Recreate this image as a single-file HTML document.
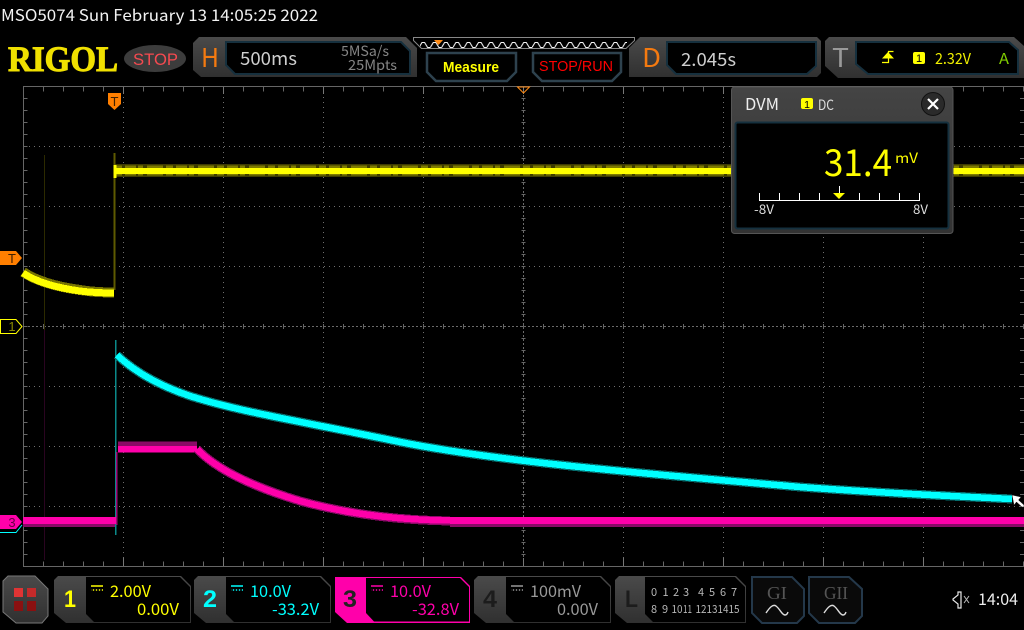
<!DOCTYPE html>
<html><head><meta charset="utf-8"><style>
html,body{margin:0;padding:0;background:#000;width:1024px;height:630px;overflow:hidden}
svg{display:block}
text{font-family:"Noto Sans CJK SC","Liberation Sans",sans-serif}
text.a{font-family:"Liberation Sans",sans-serif}
text.s{font-family:"Liberation Serif",serif}
.tr{shape-rendering:crispEdges}
</style></head><body>
<svg width="1024" height="630" viewBox="0 0 1024 630" xmlns="http://www.w3.org/2000/svg">
<defs>
<linearGradient id="g" x1="0" y1="0" x2="0" y2="1"><stop offset="0" stop-color="#4a4a4a"/><stop offset="1" stop-color="#303030"/></linearGradient>
<linearGradient id="gb" x1="0" y1="0" x2="0" y2="1"><stop offset="0" stop-color="#444"/><stop offset="1" stop-color="#333"/></linearGradient>
<pattern id="zz" x="419" y="41" width="11.3" height="8" patternUnits="userSpaceOnUse"><path d="M0 6.500 L3 1.500 L5.600 1.500 L8.600 6.500 L11.300 6.500" fill="none" stroke="#f4f4f4" stroke-width="1.100"/></pattern>
</defs>
<rect width="1024" height="630" fill="#000"/>

<!-- grid -->
<g fill="none" stroke="#5e5e5e" stroke-width="1">
<path d="M23.500 86.500H1024M23.500 86V567M23 566.500H1024" stroke="#666"/>
<g stroke-dasharray="1 4" stroke="#707070">
<path d="M24 146.500H1024M24 206.500H1024M24 266.500H1024M24 386.500H1024M24 446.500H1024M24 506.500H1024"/>
<path d="M123.500 87V566M223.500 87V566M323.500 87V566M423.500 87V566M623.500 87V566M723.500 87V566M823.500 87V566M923.500 87V566"/>
</g>
<g stroke-dasharray="2 2" stroke="#6a6a6a">
<path d="M24 326.500H1024M523.500 87V566"/>
</g>
<!-- ticks -->
<path d="M23 89H1024" stroke-width="5" stroke-dasharray="1 19" stroke="#666"/>
<path d="M23 564H1024" stroke-width="5" stroke-dasharray="1 19" stroke="#666"/>
<path d="M23 326.500H1024" stroke-width="5" stroke-dasharray="1 19" stroke="#666"/>
<path d="M25.500 86V566" stroke-width="4" stroke-dasharray="1 11" stroke="#666"/>
<path d="M1022 86V566" stroke-width="4" stroke-dasharray="1 11" stroke="#666"/>
<path d="M523.500 86V566" stroke-width="4" stroke-dasharray="1 11" stroke="#666"/>
<path d="M123.500 87V94M223.500 87V94M323.500 87V94M423.500 87V94M523.500 87V94M623.500 87V94M723.500 87V94M823.500 87V94M923.500 87V94" stroke="#777"/>
<path d="M123.500 558V566M223.500 558V566M323.500 558V566M423.500 558V566M523.500 558V566M623.500 558V566M723.500 558V566M823.500 558V566M923.500 558V566" stroke="#777"/>
</g>

<!-- ghost lines -->
<path d="M44.500 155V330" stroke="#2c2a00" stroke-width="1"/>
<path d="M44.500 330V560" stroke="#2a0420" stroke-width="1"/>

<!-- yellow trace -->
<g fill="none" class="tr">
<path d="M115 170.500H1024" stroke="#3e3c00" stroke-width="13"/>
<path d="M115 170.500H1024" stroke="#7e7b00" stroke-width="10" stroke-dasharray="7 3 11 2 5 4 16 3"/>
<path d="M115 171H1024" stroke="#ffff00" stroke-width="6"/>
<path d="M114.500 153V290" stroke="#5e5a00" stroke-width="2"/>
<path d="M115 165V178" stroke="#ffff00" stroke-width="3"/>
<path d="M23 272C38 282 58 287 80 290C92 292 102 292.500 114 292.500" stroke="#777400" stroke-width="10"/>
<path d="M23 273C38 283 58 288 80 291C92 292.500 102 293 114 293" stroke="#ffff00" stroke-width="7"/>
</g>

<!-- cyan trace -->
<g fill="none" class="tr">
<path d="M115.500 340V535" stroke="#0b8a8a" stroke-width="1.500"/>
<path d="M117 355C135 372 160 386 190 396C240 412 300 421 400 442C500 462 650 474 800 487C880 493 950 496 1012 499" stroke="#056c6c" stroke-width="9"/>
<path d="M117 355C135 372 160 386 190 396C240 412 300 421 400 442C500 462 650 474 800 487C880 493 950 496 1012 499" stroke="#00ffff" stroke-width="6.500"/>
</g>

<!-- magenta trace -->
<g fill="none" class="tr">
<path d="M23 522H115M450 522H1024" stroke="#8a0a66" stroke-width="10"/>
<path d="M23 520.500H116" stroke="#ff00aa" stroke-width="7"/>
<path d="M116.500 452V525" stroke="#a00a78" stroke-width="1.500"/>
<path d="M118 447H197" stroke="#8a0a66" stroke-width="11"/>
<path d="M118 449H197" stroke="#ff00aa" stroke-width="6.500"/>
<path d="M197 449C215 468 250 486 300 501C340 512 390 520 450 521" stroke="#8a0a66" stroke-width="9"/>
<path d="M197 449C215 468 250 486 300 501C340 512 390 520 450 520.500" stroke="#ff00aa" stroke-width="6.500"/>
<path d="M450 520.500H1024" stroke="#ff00aa" stroke-width="7"/>
</g>

<!-- cursor -->
<path d="M1012 495L1021 497L1018.500 500L1024 505L1024 507L1022 507L1016.500 502L1014 505Z" fill="#fff" stroke="#222" stroke-width=".5"/>

<!-- markers -->
<path d="M108 93H121V104L114.500 110L108 104Z" fill="#ff7f00"/>
<text class="a" x="114.500" y="106" font-size="13" text-anchor="middle" fill="#402000">T</text>
<path d="M517.500 87H529.500L523.500 93Z" fill="none" stroke="#ff8a14" stroke-width="1"/>
<path d="M0 251H16L22 258L16 265H0Z" fill="#ff7f00"/>
<text class="a" x="12" y="263" font-size="13" text-anchor="middle" fill="#402000">T</text>
<path d="M0.500 319.500H16L22 326.500L16 333.500H0.500Z" fill="#000" stroke="#ffff00" stroke-width="1"/>
<text class="a" x="12" y="331" font-size="13" text-anchor="middle" fill="#8a8a00">1</text>
<path d="M0 532.500H16L22 525" fill="none" stroke="#00ffff" stroke-width="1"/>
<path d="M0 515H16L22 522L16 529H0Z" fill="#ff00aa"/>
<text class="a" x="12" y="527" font-size="13" text-anchor="middle" fill="#660044">3</text>

<!-- header -->
<text x="1" y="21" font-size="16" fill="#f2f2f2" textLength="317" lengthAdjust="spacingAndGlyphs">MSO5074  Sun February 13 14:05:25 2022</text>
<text class="s" x="8" y="71" font-size="36" font-weight="bold" fill="#f0e000" stroke="#f0e000" stroke-width="1" textLength="110" lengthAdjust="spacingAndGlyphs">RIGOL</text>
<ellipse cx="155" cy="58.500" rx="31" ry="13.500" fill="#3c3c3c"/>
<text class="a" x="133" y="65" font-size="17" fill="#f54a50" textLength="45" lengthAdjust="spacingAndGlyphs">STOP</text>

<!-- H -->
<path d="M199 37H406L417 48V77H201L193 70V43Z" fill="url(#g)"/>
<path d="M226 42H401L410 51V74H235L226 65Z" fill="#000" stroke="#16303e" stroke-width="2"/>
<text x="201" y="67" font-size="26" fill="#f47a10" textLength="18" lengthAdjust="spacingAndGlyphs">H</text>
<text x="240" y="65" font-size="18" fill="#cfcfcf" textLength="57" lengthAdjust="spacingAndGlyphs">500ms</text>
<text x="341" y="56" font-size="14" fill="#858585" textLength="48" lengthAdjust="spacingAndGlyphs">5MSa/s</text>
<text x="348" y="70" font-size="14" fill="#858585" textLength="49" lengthAdjust="spacingAndGlyphs">25Mpts</text>

<!-- zigzag bar -->
<path d="M413.500 37.500H634.500V40.500L626 48.500H421.500L413.500 40.500Z" fill="#000" stroke="#888" stroke-width="1"/>
<rect x="420" y="41" width="207" height="7" fill="url(#zz)"/>
<path d="M434 40H443L438.500 45Z" fill="#ff8a14"/>

<!-- Measure / STOP -->
<path d="M427 53H516V72L507 81H436L427 72Z" fill="#000" stroke="#2e424e" stroke-width="2.500"/>
<text class="a" x="443" y="72" font-size="15" font-weight="bold" fill="#ffff00" textLength="56" lengthAdjust="spacingAndGlyphs">Measure</text>
<path d="M533 53H621V72L612 81H542L533 72Z" fill="#000" stroke="#2e424e" stroke-width="2.500"/>
<text class="a" x="539" y="71" font-size="14.500" fill="#ff0000" textLength="74" lengthAdjust="spacingAndGlyphs">STOP/RUN</text>

<!-- D -->
<path d="M640 37H817L821 41V73L817 77H629V48Z" fill="url(#g)"/>
<path d="M667 42H816V66L807 74H676L667 65Z" fill="#000" stroke="#16303e" stroke-width="2"/>
<text x="642" y="67" font-size="26" fill="#f47a10" textLength="19" lengthAdjust="spacingAndGlyphs">D</text>
<text x="681" y="66" font-size="18" fill="#cfcfcf" textLength="55" lengthAdjust="spacingAndGlyphs">2.045s</text>

<!-- T -->
<path d="M829 37H1014L1024 46V78H838L825 66V41Z" fill="url(#g)"/>
<path d="M856 42H1009L1018 50V74H868L856 64Z" fill="#000" stroke="#16303e" stroke-width="2"/>
<text x="832" y="67" font-size="26" fill="#9a9a9a" textLength="17" lengthAdjust="spacingAndGlyphs">T</text>
<path d="M882 62.500H888.500V51.500H893.500" fill="none" stroke="#ffff00" stroke-width="1.200"/>
<path d="M888 52L882 58.500H894Z" fill="#ffff00"/>
<rect x="913" y="52" width="12" height="12" rx="2" fill="#ffff00"/>
<text class="a" x="919" y="62" font-size="11" text-anchor="middle" fill="#000">1</text>
<text x="935" y="64" font-size="15" fill="#f0f000" textLength="36" lengthAdjust="spacingAndGlyphs">2.32V</text>
<text x="999" y="64" font-size="15" fill="#80cc00" textLength="10" lengthAdjust="spacingAndGlyphs">A</text>

<!-- DVM -->
<rect x="731.500" y="87" width="221.500" height="146.500" rx="3" fill="url(#gb)" stroke="#555" stroke-width="1"/>
<rect x="735.500" y="122.500" width="213" height="106" rx="2" fill="#000" stroke="#15303e" stroke-width="2"/>
<text x="745" y="110" font-size="16" fill="#eee" textLength="34" lengthAdjust="spacingAndGlyphs">DVM</text>
<rect x="801" y="98" width="12" height="11" rx="2" fill="#ffff00"/>
<text class="a" x="807" y="108" font-size="10.500" text-anchor="middle" fill="#000">1</text>
<text x="818" y="110" font-size="14" fill="#ddd" textLength="16" lengthAdjust="spacingAndGlyphs">DC</text>
<circle cx="933" cy="104" r="11.500" fill="#2a2a2a" stroke="#111" stroke-width="1"/>
<path d="M928 99L938 109M938 99L928 109" stroke="#fff" stroke-width="2.200"/>
<text x="824" y="176" font-size="37" fill="#ffff00" textLength="68" lengthAdjust="spacingAndGlyphs">31.4</text>
<text x="895" y="163" font-size="14" fill="#ffff00" textLength="23" lengthAdjust="spacingAndGlyphs">mV</text>
<path d="M759.500 193V200.500H919.500V193M779.500 193V200M799.500 193V200M819.500 193V200M859.500 193V200M879.500 193V200M899.500 193V200M839.500 186V193" fill="none" stroke="#fff" stroke-width="1"/>
<path d="M833 193H845L839 199Z" fill="#ffff00"/>
<text x="754" y="214" font-size="13" fill="#ddd" textLength="20" lengthAdjust="spacingAndGlyphs">-8V</text>
<text x="913" y="214" font-size="13" fill="#ddd" textLength="15" lengthAdjust="spacingAndGlyphs">8V</text>

<!-- menu button -->
<path d="M8 576H35L48 589V616L42 623H16L3 612V581Z" fill="url(#g)" stroke="#777" stroke-width="1"/>
<rect x="14" y="588" width="9" height="9" fill="#e03434"/><rect x="27" y="588" width="9" height="9" fill="#c42a2a"/>
<rect x="14" y="601" width="9" height="10" fill="#8a1010"/><rect x="27" y="601" width="9" height="10" fill="#8a1010"/>

<!-- channel 1 -->
<path d="M58 576H181L191 586V623H66L54 613V580Z" fill="url(#g)"/>
<path d="M86 577H180L190 587V622H94L86 614Z" fill="#000"/>
<text class="a" x="64" y="607" font-size="24" font-weight="bold" fill="#ffff00" textLength="12" lengthAdjust="spacingAndGlyphs">1</text>
<path d="M91 586H103M91 590H103" stroke="#ffff00" stroke-width="1.500"/>
<path d="M91 590H103" stroke="#000" stroke-width="1.500" stroke-dasharray="2 1"/>
<text x="110" y="597" font-size="16" fill="#ffff00" textLength="41" lengthAdjust="spacingAndGlyphs">2.00V</text>
<text x="137" y="615" font-size="16" fill="#ffff00" textLength="42" lengthAdjust="spacingAndGlyphs">0.00V</text>

<!-- channel 2 -->
<path d="M198 576H321L331 586V623H206L194 613V580Z" fill="url(#g)"/>
<path d="M226 577H320L330 587V622H234L226 614Z" fill="#000"/>
<text class="a" x="203" y="607" font-size="24" font-weight="bold" fill="#00ffff" textLength="14" lengthAdjust="spacingAndGlyphs">2</text>
<path d="M231 586H243M231 590H243" stroke="#00ffff" stroke-width="1.500"/>
<path d="M231 590H243" stroke="#000" stroke-width="1.500" stroke-dasharray="2 1"/>
<text x="250" y="597" font-size="16" fill="#00ffff" textLength="41" lengthAdjust="spacingAndGlyphs">10.0V</text>
<text x="272" y="615" font-size="16" fill="#00ffff" textLength="47" lengthAdjust="spacingAndGlyphs">-33.2V</text>

<!-- channel 3 -->
<path d="M335 577H461L470 586V623H347L335 612Z" fill="#ff00aa"/>
<path d="M366 578H460L469 587V621.500H374L366 613Z" fill="#000"/>
<text class="a" x="343" y="607" font-size="24" font-weight="bold" fill="#222" textLength="14" lengthAdjust="spacingAndGlyphs">3</text>
<path d="M371 586H383M371 590H383" stroke="#ff00aa" stroke-width="1.500"/>
<path d="M371 590H383" stroke="#000" stroke-width="1.500" stroke-dasharray="2 1"/>
<text x="390" y="597" font-size="16" fill="#ff00aa" textLength="41" lengthAdjust="spacingAndGlyphs">10.0V</text>
<text x="412" y="615" font-size="16" fill="#ff00aa" textLength="47" lengthAdjust="spacingAndGlyphs">-32.8V</text>

<!-- channel 4 -->
<path d="M478 576H601L611 586V623H486L474 613V580Z" fill="url(#g)"/>
<path d="M506 577H600L610 587V622H514L506 614Z" fill="#000"/>
<text class="a" x="483" y="607" font-size="24" font-weight="bold" fill="#1c1c1c" textLength="14" lengthAdjust="spacingAndGlyphs">4</text>
<path d="M511 586H523M511 590H523" stroke="#999" stroke-width="1.500"/>
<path d="M511 590H523" stroke="#000" stroke-width="1.500" stroke-dasharray="2 1"/>
<text x="530" y="597" font-size="16" fill="#999" textLength="51" lengthAdjust="spacingAndGlyphs">100mV</text>
<text x="557" y="615" font-size="16" fill="#999" textLength="41" lengthAdjust="spacingAndGlyphs">0.00V</text>

<!-- L -->
<path d="M619 576H736L746 586V623H627L615 613V580Z" fill="url(#g)"/>
<path d="M645 577H735L745 587V622H653L645 614Z" fill="#000"/>
<text class="a" x="625" y="607" font-size="24" font-weight="bold" fill="#1c1c1c" textLength="13" lengthAdjust="spacingAndGlyphs">L</text>
<g font-size="11" fill="#b8b8b8" text-anchor="middle">
<text x="654" y="596">0</text><text x="665.500" y="596">1</text><text x="676" y="596">2</text><text x="686" y="596">3</text><text x="701" y="596">4</text><text x="712" y="596">5</text><text x="723" y="596">6</text><text x="734" y="596">7</text>
<text x="654" y="613">8</text><text x="665" y="613">9</text><text x="677" y="613" textLength="11" lengthAdjust="spacingAndGlyphs">10</text><text x="687.500" y="613" textLength="9" lengthAdjust="spacingAndGlyphs">11</text><text x="701" y="613" textLength="11" lengthAdjust="spacingAndGlyphs">12</text><text x="712" y="613" textLength="11" lengthAdjust="spacingAndGlyphs">13</text><text x="723" y="613" textLength="11" lengthAdjust="spacingAndGlyphs">14</text><text x="734" y="613" textLength="11" lengthAdjust="spacingAndGlyphs">15</text>
</g>

<!-- GI GII -->
<path d="M752 577H792L804 589V616L797 623H762L752 613Z" fill="#0a0a0a" stroke="#24384a" stroke-width="2"/>
<text class="s" x="767" y="599" font-size="18" fill="#555" textLength="20" lengthAdjust="spacingAndGlyphs">GI</text>
<path d="M766 613C770 607 773 604 776 606C780 609 782 615 785 615Q787 615 788 612" fill="none" stroke="#ddd" stroke-width="1.400"/>
<path d="M809 577H849L862 589V616L855 623H819L809 613Z" fill="#0a0a0a" stroke="#24384a" stroke-width="2"/>
<text class="s" x="824" y="599" font-size="18" fill="#555" textLength="24" lengthAdjust="spacingAndGlyphs">GII</text>
<path d="M824 613C828 607 831 604 834 606C838 609 840 615 843 615Q845 615 846 612" fill="none" stroke="#ddd" stroke-width="1.400"/>

<!-- speaker + time -->
<path d="M953 599L958 595V592H961V608H958V604L953 600Z" fill="none" stroke="#e8e8e8" stroke-width="1.200"/>
<path d="M964 596L969 603M969 596L964 603" stroke="#bbb" stroke-width="1"/>
<text x="978" y="605" font-size="16" fill="#eee" textLength="40" lengthAdjust="spacingAndGlyphs">14:04</text>
</svg>
</body></html>
